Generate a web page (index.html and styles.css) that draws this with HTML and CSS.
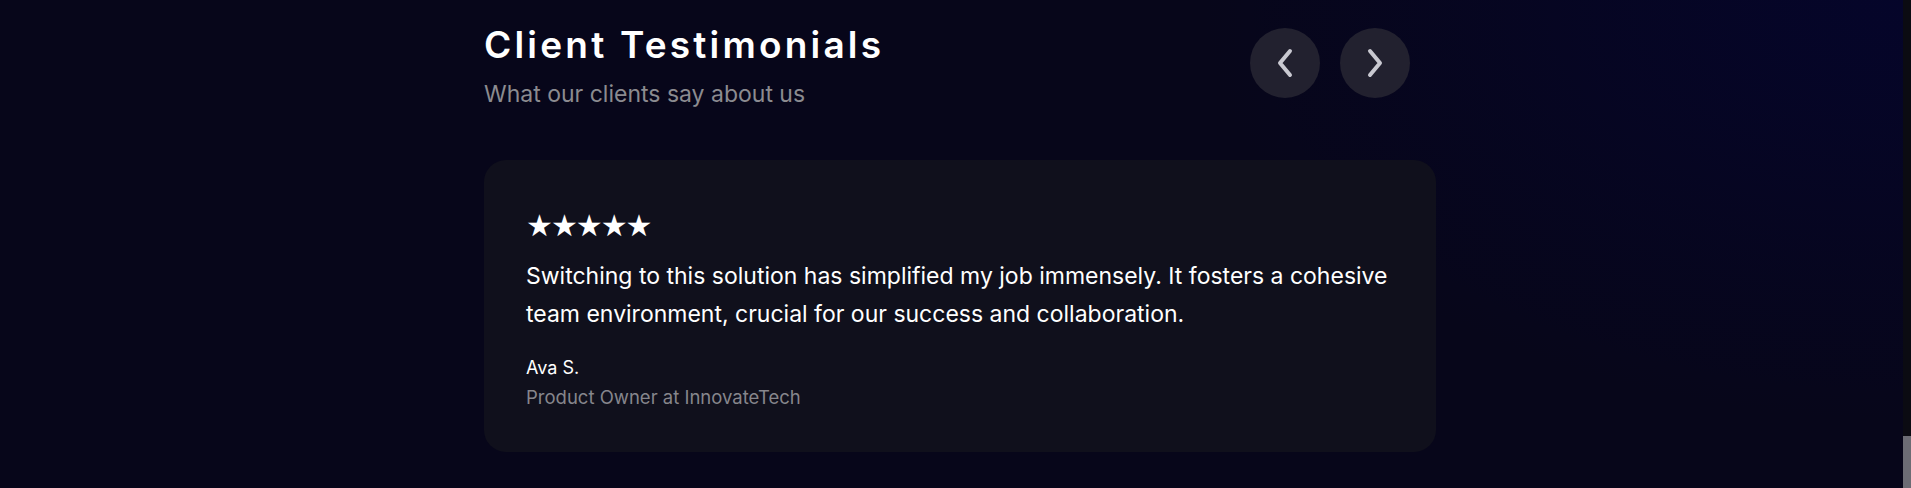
FILE: index.html
```html
<!DOCTYPE html>
<html lang="en">
<head>
<meta charset="utf-8">
<title>Client Testimonials</title>
<link rel="stylesheet" href="styles.css">
</head>
<body>
<div class="page">
  <main class="main">
    <section class="testimonials">
      <header class="head">
        <div class="titles">
          <h2 class="title">Client Testimonials</h2>
          <p class="subtitle">What our clients say about us</p>
        </div>
        <div class="nav">
          <button class="nav-btn" aria-label="Previous">
            <svg width="20" height="32" viewBox="0 0 20 32"><polyline points="15,4 5,16 15,28" fill="none" stroke="#c9c9d1" stroke-width="4" stroke-linecap="round" stroke-linejoin="round"/></svg>
          </button>
          <button class="nav-btn" aria-label="Next">
            <svg width="20" height="32" viewBox="0 0 20 32"><polyline points="5,4 15,16 5,28" fill="none" stroke="#c9c9d1" stroke-width="4" stroke-linecap="round" stroke-linejoin="round"/></svg>
          </button>
        </div>
      </header>
      <article class="card">
        <div class="stars">★★★★★</div>
        <p class="quote">Switching to this solution has simplified my job immensely. It fosters a cohesive team environment, crucial for our success and collaboration.</p>
        <p class="name">Ava S.</p>
        <p class="role">Product Owner at InnovateTech</p>
      </article>
    </section>
  </main>
  <div class="scrollbar"><div class="thumb"></div></div>
</div>
</body>
</html>
```

FILE: styles.css
```css
html, body {
  margin: 0;
  padding: 0;
  height: 100%;
}
body {
  background: #07061a;
  font-family: "Inter", "Liberation Sans", sans-serif;
  color: #ffffff;
  overflow: hidden;
}
.page {
  display: flex;
  height: 488px;
}
.main {
  flex: 1;
  background:
    radial-gradient(ellipse 700px 420px at 100% 0%, #05052a 0%, rgba(5,5,40,0) 100%),
    #07061a;
}
.testimonials {
  width: 952px;
  margin-left: 484px;
  padding-top: 23px;
}
.head {
  display: flex;
  justify-content: space-between;
  align-items: flex-start;
  padding-right: 26px;
}
.title {
  margin: 0;
  font-size: 37px;
  line-height: 44px;
  font-weight: 600;
  letter-spacing: 3.2px;
}
.subtitle {
  margin: 12px 0 0 0;
  font-size: 23px;
  line-height: 30px;
  color: #8b8b90;
  font-weight: 400;
}
.nav {
  display: flex;
  gap: 20px;
  margin-top: 5px;
}
.nav-btn {
  width: 70px;
  height: 70px;
  border-radius: 50%;
  border: none;
  background: #22212f;
  display: flex;
  align-items: center;
  justify-content: center;
  padding: 0;
}
.card {
  margin-top: 51px;
  background: #10101c;
  border-radius: 22px;
  padding: 51px 40px 40px 42px;
  height: 292px;
  box-sizing: border-box;
}
.stars {
  font-family: "DejaVu Sans", sans-serif;
  font-size: 30px;
  line-height: 30px;
  letter-spacing: -2px;
}
.quote {
  margin: 16px 0 0 0;
  font-size: 23px;
  line-height: 38px;
  font-weight: 400;
}
.name {
  margin: 22px 0 0 0;
  font-size: 18px;
  line-height: 26px;
}
.role {
  margin: 3px 0 0 0;
  font-size: 18.5px;
  line-height: 26px;
  color: #86868c;
}
.scrollbar {
  width: 8px;
  background: #0b0b12;
  display: flex;
  flex-direction: column;
  justify-content: flex-end;
}
.thumb {
  height: 52px;
  background: #6c6c74;
}
```
